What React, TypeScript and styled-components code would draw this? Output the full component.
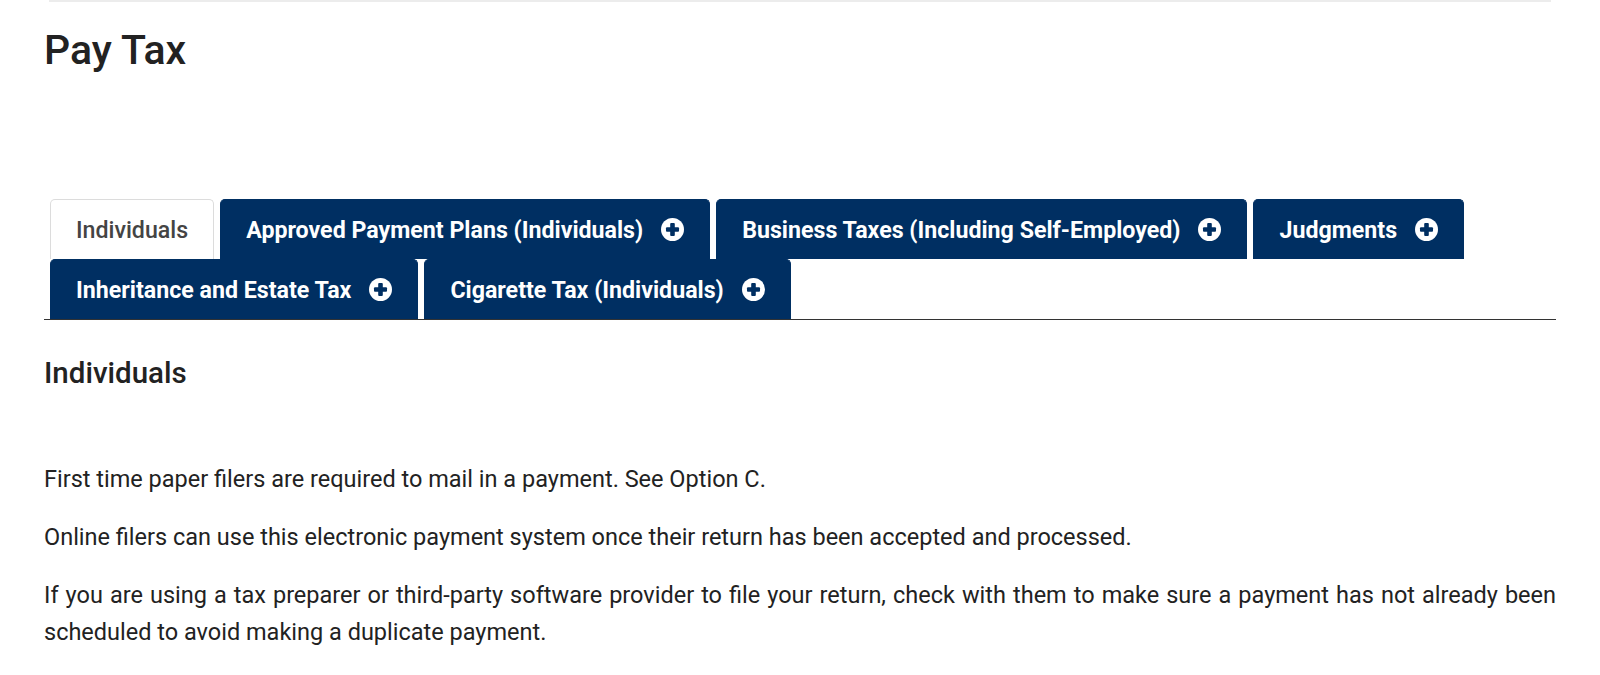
import React, { useState } from 'react';
import styled, { createGlobalStyle } from 'styled-components';

const GlobalStyle = createGlobalStyle`
  body {
    margin: 0;
    background: #fff;
    font-family: Roboto, "Liberation Sans", Arial, sans-serif;
    color: #1b1b1b;
  }
`;

const Page = styled.div`
  padding: 0 44px;
`;

const TopRule = styled.div`
  height: 2px;
  background: #ececec;
  margin: 0 5px;
`;

const Title = styled.h1`
  font-size: 41px;
  font-weight: 500;
  line-height: 48px;
  color: #222;
  margin: 24px 0 0;
`;

const TabList = styled.div`
  display: flex;
  flex-wrap: wrap;
  column-gap: 6px;
  padding-left: 6px;
  margin-top: 125px;
  border-bottom: 1px solid #333;
`;

const Tab = styled.button<{ $active?: boolean }>`
  display: flex;
  align-items: center;
  gap: 18px;
  height: 60px;
  padding: 0 25px;
  border: 1px solid ${p => (p.$active ? '#dcdcdc' : '#002f62')};
  border-bottom: none;
  border-radius: 5px 5px 0 0;
  background: ${p => (p.$active ? '#fff' : '#002f62')};
  color: ${p => (p.$active ? '#444' : '#fff')};
  font-family: Roboto, "Liberation Sans", Arial, sans-serif;
  font-size: 23.2px;
  font-weight: ${p => (p.$active ? 500 : 700)};
  white-space: nowrap;
  cursor: pointer;
`;

const PlusIcon = styled.svg`
  width: 23px;
  height: 23px;
  flex-shrink: 0;
`;

const Panel = styled.section`
  padding-top: 36px;
`;

const PanelTitle = styled.h3`
  font-size: 29.5px;
  font-weight: 500;
  line-height: 35px;
  color: #222;
  margin: 0 0 70px;
`;

const Text = styled.p`
  font-size: 23.5px;
  line-height: 37px;
  color: #222;
  text-align: justify;
  margin: 0 0 21px;
`;

const Plus = () => (
  <PlusIcon viewBox="0 0 24 24">
    <circle cx="12" cy="12" r="12" fill="#fff" />
    <rect x="5.2" y="9.6" width="13.6" height="4.8" rx="1" fill="#002f62" />
    <rect x="9.6" y="5.2" width="4.8" height="13.6" rx="1" fill="#002f62" />
  </PlusIcon>
);

const tabs = [
  'Individuals',
  'Approved Payment Plans (Individuals)',
  'Business Taxes (Including Self-Employed)',
  'Judgments',
  'Inheritance and Estate Tax',
  'Cigarette Tax (Individuals)',
];

const App = () => {
  const [active, setActive] = useState(0);

  return (
    <Page>
      <GlobalStyle />
      <TopRule />
      <Title>Pay Tax</Title>
      <TabList>
        {tabs.map((t, i) => (
          <Tab key={t} $active={i === active} onClick={() => setActive(i)}>
            {t}
            {i !== active && <Plus />}
          </Tab>
        ))}
      </TabList>
      <Panel>
        <PanelTitle>{tabs[active]}</PanelTitle>
        <Text>First time paper filers are required to mail in a payment. See Option C.</Text>
        <Text>Online filers can use this electronic payment system once their return has been accepted and processed.</Text>
        <Text>
          If you are using a tax preparer or third-party software provider to file your return, check with them to make
          sure a payment has not already been scheduled to avoid making a duplicate payment.
        </Text>
      </Panel>
    </Page>
  );
};

export default App;
